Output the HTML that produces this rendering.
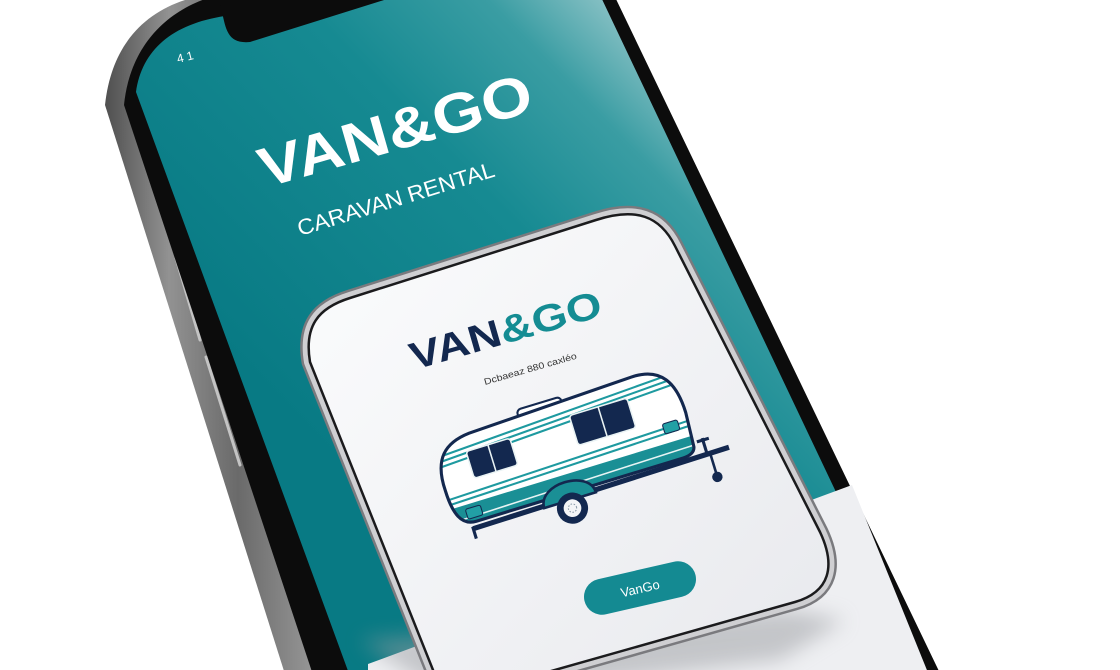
<!DOCTYPE html>
<html><head><meta charset="utf-8"><style>
html,body{margin:0;padding:0;background:#fff;}
svg{display:block;}
text{font-family:"Liberation Sans",sans-serif;}
</style></head><body>
<svg width="1120" height="670" viewBox="0 0 1120 670" xmlns="http://www.w3.org/2000/svg">
<defs>
<linearGradient id="teal" x1="250" y1="380" x2="640" y2="0" gradientUnits="userSpaceOnUse">
<stop offset="0" stop-color="#087a84"/>
<stop offset="0.55" stop-color="#168a92"/>
<stop offset="0.8" stop-color="#3a9da3"/>
<stop offset="1" stop-color="#9ccacd"/>
</linearGradient>
<linearGradient id="frame" x1="100" y1="0" x2="330" y2="0" gradientUnits="userSpaceOnUse">
<stop offset="0" stop-color="#4a4a4a"/>
<stop offset="0.3" stop-color="#929292"/>
<stop offset="0.6" stop-color="#6a6a6a"/>
<stop offset="1" stop-color="#a0a0a0"/>
</linearGradient>
<linearGradient id="cardf" x1="300" y1="300" x2="830" y2="650" gradientUnits="userSpaceOnUse">
<stop offset="0" stop-color="#dcdcde"/>
<stop offset="0.5" stop-color="#b4b4b7"/>
<stop offset="1" stop-color="#8d8d90"/>
</linearGradient>
<linearGradient id="cardw" x1="350" y1="250" x2="800" y2="650" gradientUnits="userSpaceOnUse">
<stop offset="0" stop-color="#fafbfc"/>
<stop offset="1" stop-color="#e9eaee"/>
</linearGradient>
<filter id="blur" x="-20%" y="-20%" width="140%" height="140%"><feGaussianBlur stdDeviation="10"/></filter>
<clipPath id="body"><path d="M -133,-8 C -134,-40 -120,-52 -95,-54 L 70,-60 C 100,-61 110,-42 110,-12 L 108,20 C 108,27 101,29 95,29 L -113,29 C -128,29 -133,15 -133,-8 Z"/></clipPath>
</defs>

<!-- phone frame -->
<path d="M 205,-5 C 150,5 112,40 105,105 L 290,690 L 948,690 L 614,-5 Z" fill="url(#frame)"/>
<!-- side buttons -->
<path d="M 176,258 L 200,340" stroke="#c4c4c4" stroke-width="3" stroke-linecap="round"/>
<path d="M 206,357 L 240,465" stroke="#c4c4c4" stroke-width="3" stroke-linecap="round"/>
<!-- black bezel -->
<path d="M 218,-5 C 168,8 130,45 124,105 L 318,690 L 948,690 L 614,-5 Z" fill="#0c0c0c"/>
<!-- screen -->
<path d="M 225,16 C 172,24 142,50 136,92 L 355,690 L 930,690 L 600,-5 L 230,-5 Z" fill="url(#teal)"/>
<!-- notch -->
<path d="M 218,-5 L 222,12 C 226,30 228,44 250,42 L 400,-5 Z" fill="#0c0c0c"/>
<!-- white lower screen -->
<path d="M 368,664 L 852,485 L 935,690 L 368,690 Z" fill="#eeeff2"/>

<text x="178" y="63" font-size="12" fill="#ffffff" transform="rotate(-14 178 63)">4 1</text>

<text x="265" y="188" font-size="56" font-weight="bold" fill="#ffffff" textLength="282" lengthAdjust="spacingAndGlyphs" transform="rotate(-16 265 188)">VAN&amp;GO</text>
<text x="300" y="236" font-size="22" fill="#ffffff" textLength="205" lengthAdjust="spacingAndGlyphs" transform="rotate(-17 300 236)">CARAVAN RENTAL</text>

<!-- card shadow -->
<path d="M 360,640 L 790,610 L 845,620 L 780,660 L 450,700 Z" fill="#9a9ca0" opacity="0.5" filter="url(#blur)"/>
<!-- card -->
<path d="M 310,362 C 304,326 318,308 350,298 L 596,220 C 636,207 660,216 675,246 L 820,532 C 836,566 830,592 795,602 L 470,694 L 445,700 Z" fill="url(#cardf)" stroke="#7a7a7e" stroke-width="17" stroke-linejoin="round"/>
<path d="M 310,362 C 304,326 318,308 350,298 L 596,220 C 636,207 660,216 675,246 L 820,532 C 836,566 830,592 795,602 L 470,694 L 445,700 Z" fill="url(#cardf)" stroke="#cfcfd2" stroke-width="12" stroke-linejoin="round"/>
<path d="M 310,362 C 304,326 318,308 350,298 L 596,220 C 636,207 660,216 675,246 L 820,532 C 836,566 830,592 795,602 L 470,694 L 445,700 Z" fill="url(#cardw)" stroke="#1b1b1d" stroke-width="2.5" stroke-linejoin="round"/>

<!-- card text -->
<g transform="rotate(-16 414 370)">
<text x="414" y="370" font-size="38" font-weight="bold" textLength="198" lengthAdjust="spacingAndGlyphs"><tspan fill="#13284f">VAN</tspan><tspan fill="#148c93">&amp;GO</tspan></text>
</g>
<text x="485" y="385" font-size="9" fill="#333" textLength="96" lengthAdjust="spacingAndGlyphs" transform="rotate(-16 485 385)">Dcbaeaz 880 caxléo</text>

<!-- caravan -->
<g transform="translate(580,458) rotate(-17) scale(1.04)">
<rect x="-45" y="-62" width="44" height="9" rx="4" fill="#fff" stroke="#13284f" stroke-width="2"/>
<path d="M -133,-8 C -134,-40 -120,-52 -95,-54 L 70,-60 C 100,-61 110,-42 110,-12 L 108,20 C 108,27 101,29 95,29 L -113,29 C -128,29 -133,15 -133,-8 Z" fill="#fff"/>
<g clip-path="url(#body)">
<path d="M -140,-40 L 115,-52" stroke="#1e9aa0" stroke-width="2"/>
<path d="M -140,-35 L 115,-47" stroke="#1e9aa0" stroke-width="2"/>
<path d="M -140,-30 L 115,-42" stroke="#1e9aa0" stroke-width="2"/>
<path d="M -140,2 L 115,-4" stroke="#1e9aa0" stroke-width="2"/>
<path d="M -140,7 L 115,1" stroke="#1e9aa0" stroke-width="2"/>
<rect x="-140" y="11" width="260" height="25" fill="#1a8f95"/>
<path d="M -140,24 L 115,20" stroke="#e8f4f4" stroke-width="1.5"/>
</g>
<path d="M -133,-8 C -134,-40 -120,-52 -95,-54 L 70,-60 C 100,-61 110,-42 110,-12 L 108,20 C 108,27 101,29 95,29 L -113,29 C -128,29 -133,15 -133,-8 Z" fill="none" stroke="#13284f" stroke-width="3"/>
<rect x="-103" y="-38" width="44" height="27" rx="3" fill="#13284f" stroke="#eaf3f4" stroke-width="1.5"/>
<line x1="-81" y1="-38" x2="-81" y2="-11" stroke="#eaf3f4" stroke-width="1.5"/>
<rect x="2" y="-42" width="58" height="30" rx="3" fill="#13284f" stroke="#eaf3f4" stroke-width="1.5"/>
<line x1="31" y1="-42" x2="31" y2="-12" stroke="#eaf3f4" stroke-width="1.5"/>
<rect x="-120" y="15" width="15" height="10" rx="2" fill="#22a0a5" stroke="#13284f" stroke-width="1"/>
<rect x="85" y="-8" width="15" height="10" rx="2" fill="#22a0a5" stroke="#13284f" stroke-width="1"/>
<path d="M -118,35 L 140,32" stroke="#13284f" stroke-width="5"/>
<path d="M -118,33 L -118,45" stroke="#13284f" stroke-width="3"/>
<path d="M 118,32 L 118,16" stroke="#13284f" stroke-width="3"/>
<path d="M 112,18 L 124,18" stroke="#13284f" stroke-width="3"/>
<path d="M 121,33 L 121,52" stroke="#13284f" stroke-width="2.5"/>
<circle cx="121" cy="56" r="5" fill="#13284f"/>
<path d="M -47,36 C -47,12 5,12 5,36 Z" fill="#1a8f95" stroke="#13284f" stroke-width="2.5"/>
<circle cx="-21" cy="44" r="15" fill="#13284f"/>
<circle cx="-21" cy="44" r="8.5" fill="#f4f5f7"/>
<circle cx="-21" cy="44" r="4" fill="none" stroke="#8a9aa8" stroke-width="1" stroke-dasharray="1.5 1.5"/>
</g>

<!-- button -->
<g transform="rotate(-13 640 588)">
<rect x="583" y="570" width="114" height="36" rx="18" fill="#148a92"/>
<text x="640" y="593" font-size="13" fill="#ffffff" text-anchor="middle">VanGo</text>
</g>
</svg>
</body></html>
